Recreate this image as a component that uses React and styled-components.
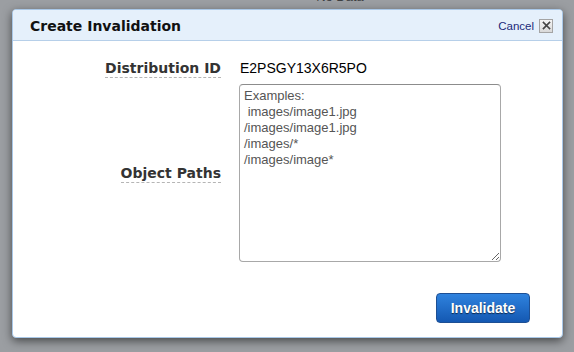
import React from "react";
import styled, { createGlobalStyle } from "styled-components";

const GlobalStyle = createGlobalStyle`
  html, body {
    margin: 0;
    padding: 0;
    background: #9b9ea2;
    overflow: hidden;
  }
`;

const examples =
  "Examples:\n images/image1.jpg\n/images/image1.jpg\n/images/*\n/images/image*";

export default function App() {
  return (
    <>
      <GlobalStyle />
      <Backdrop>
        <BehindText>No Data</BehindText>
        <Dialog>
          <Header>
            <Title>Create Invalidation</Title>
            <Cancel>
              <CancelLink href="#">Cancel</CancelLink>
              <CloseBox aria-label="Close">
                <svg width="9" height="9" viewBox="0 0 9 9">
                  <path
                    d="M1.5 1.5 L7.5 7.5 M7.5 1.5 L1.5 7.5"
                    stroke="#444"
                    strokeWidth="1.7"
                    strokeLinecap="square"
                  />
                </svg>
              </CloseBox>
            </Cancel>
          </Header>
          <Body>
            <Form>
              <LabelCell>
                <Label>Distribution ID</Label>
              </LabelCell>
              <Value>E2PSGY13X6R5PO</Value>
              <LabelCell>
                <Label htmlFor="paths">Object Paths</Label>
              </LabelCell>
              <Paths id="paths" placeholder={examples} />
            </Form>
            <Footer>
              <Button>Invalidate</Button>
            </Footer>
          </Body>
        </Dialog>
      </Backdrop>
    </>
  );
}

const Backdrop = styled.div`
  height: 352px;
  display: flex;
  flex-direction: column;
`;

const BehindText = styled.div`
  height: 4px;
  margin-top: -10px;
  padding-left: 106px;
  text-align: center;
  font: 13px/13px "Liberation Sans", Arial, sans-serif;
  color: #3d3f42;
`;

const Dialog = styled.div`
  margin: 15px 0 0 12px;
  width: 551px;
  height: 329px;
  box-sizing: border-box;
  background: #fff;
  border: 1px solid #a9c8e8;
  border-radius: 4px;
  box-shadow: 0 3px 10px rgba(0, 0, 0, 0.55);
  display: flex;
  flex-direction: column;
  overflow: hidden;
`;

const Header = styled.div`
  height: 31px;
  box-sizing: border-box;
  background: #e5f0fb;
  border-bottom: 1px solid #b6cfe9;
  display: flex;
  align-items: center;
  justify-content: space-between;
  padding: 1px 9px 0 17px;
`;

const Title = styled.h1`
  margin: 0;
  font: bold 14px "DejaVu Sans", Verdana, sans-serif;
  color: #111;
`;

const Cancel = styled.div`
  display: flex;
  align-items: center;
  gap: 5px;
`;

const CancelLink = styled.a`
  font: 11.5px "Liberation Sans", Arial, sans-serif;
  color: #1b2a7a;
  text-decoration: none;
`;

const CloseBox = styled.button`
  width: 14px;
  height: 14px;
  padding: 0;
  box-sizing: border-box;
  border: 1px solid #a4a4a4;
  background: linear-gradient(#f4f4f4, #d9d9d9);
  display: flex;
  align-items: center;
  justify-content: center;
`;

const Body = styled.div`
  flex: 1;
  display: flex;
  flex-direction: column;
  padding: 17px 32px 0 0;
`;

const Form = styled.div`
  display: grid;
  grid-template-columns: 208px 262px;
  column-gap: 18px;
  row-gap: 6px;
  align-items: center;
`;

const LabelCell = styled.div`
  text-align: right;
`;

const Label = styled.label`
  display: inline-block;
  font: bold 14px/16px "DejaVu Sans", Verdana, sans-serif;
  color: #333;
  padding-bottom: 1px;
  border-bottom: 1px dashed #b5b5b5;
`;

const Value = styled.div`
  font: 14px/20px "Liberation Sans", Arial, sans-serif;
  color: #000;
  padding-left: 1px;
`;

const Paths = styled.textarea`
  width: 262px;
  height: 178px;
  box-sizing: border-box;
  margin: 0;
  padding: 3px 4px;
  border: 1px solid #a8a8a8;
  border-top-color: #8c8c8c;
  border-radius: 4px;
  font: 13px/16px "Liberation Sans", Arial, sans-serif;
  color: #222;
  outline: none;

  &::placeholder {
    color: #555;
    opacity: 1;
  }
`;

const Footer = styled.div`
  display: flex;
  justify-content: flex-end;
  margin-top: 31px;
`;

const Button = styled.button`
  width: 94px;
  height: 30px;
  box-sizing: border-box;
  border: 1px solid #1d4f94;
  border-radius: 4px;
  background: linear-gradient(#2f82de, #1458b2);
  color: #fff;
  font: bold 14px "Liberation Sans", Arial, sans-serif;
  text-shadow: 0 1px 1px rgba(0, 0, 0, 0.6);
  cursor: pointer;
`;
